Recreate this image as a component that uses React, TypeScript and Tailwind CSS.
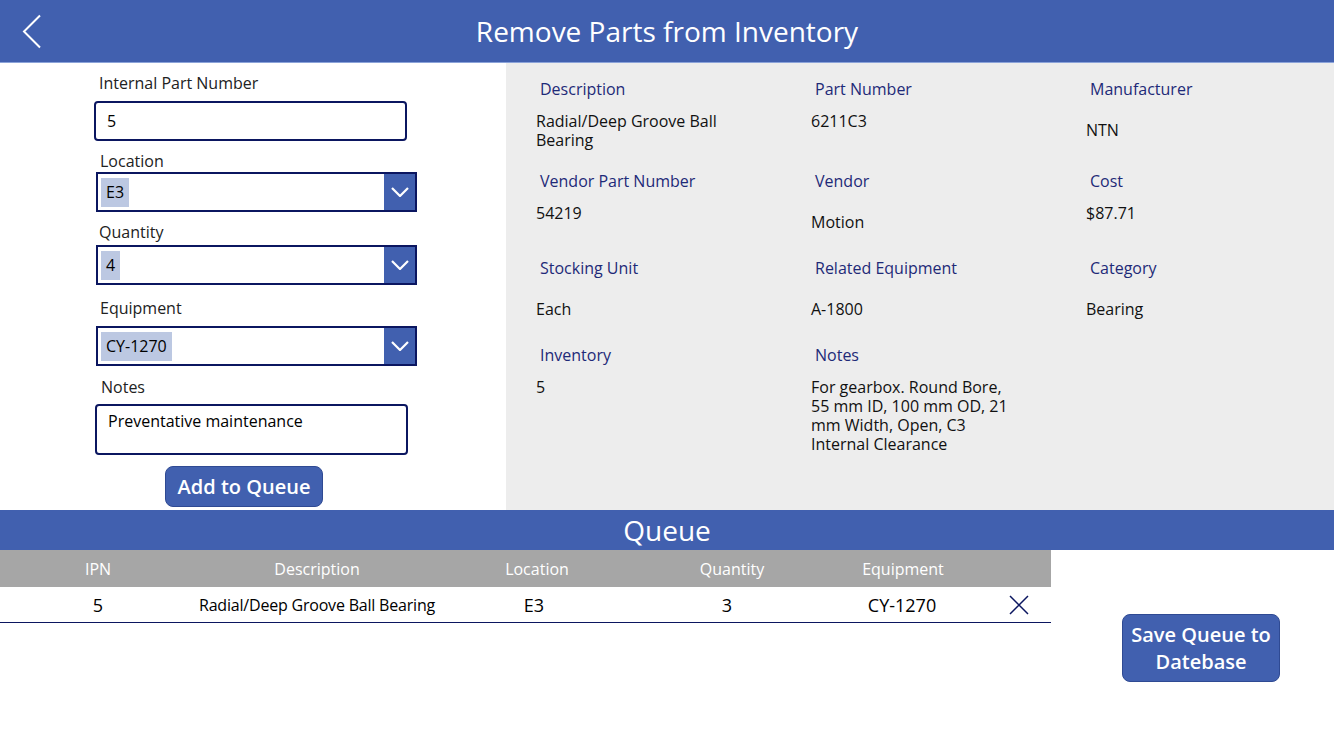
import { ReactNode } from 'react'

const font = { fontFamily: '"Open Sans", "Noto Sans", sans-serif' }

function Chevron() {
  return (
    <svg width="18" height="10" viewBox="0 0 18 10" fill="none" aria-hidden="true">
      <path d="M1 1l8 8 8-8" stroke="white" strokeWidth="2.2" />
    </svg>
  )
}

function Dropdown({ value }: { value: string }) {
  return (
    <div className="flex h-[40px] w-[321px] border-2 border-[#0b1660] bg-white">
      <div className="flex flex-1 items-center pl-[3px]">
        <span className="flex h-[29px] items-center bg-[#bcc8e2] px-[5px] text-[16px] text-black">
          {value}
        </span>
      </div>
      <div className="flex w-[31px] items-center justify-center bg-[#4160af]">
        <Chevron />
      </div>
    </div>
  )
}

function Label({ children, className = '' }: { children: ReactNode; className?: string }) {
  return <p className={`h-[22px] text-[16px] leading-[22px] text-[#222] ${className}`}>{children}</p>
}

function Field({
  label,
  value,
  shift = false,
  multi = false,
}: {
  label: string
  value: ReactNode
  shift?: boolean
  multi?: boolean
}) {
  return (
    <div>
      <p className="h-[22px] pl-[4px] text-[16px] leading-[22px] text-[#1e2a78]">{label}</p>
      <div
        className={`text-[16px] leading-[19px] text-[#111] ${shift ? 'pt-[21px]' : 'pt-[12px]'} ${
          multi ? 'w-[206px]' : ''
        }`}
      >
        {value}
      </div>
    </div>
  )
}

const columns = [
  { key: 'ipn', label: 'IPN', width: 'w-[196px]' },
  { key: 'desc', label: 'Description', width: 'w-[242px]' },
  { key: 'loc', label: 'Location', width: 'w-[198px]' },
  { key: 'qty', label: 'Quantity', width: 'w-[192px]' },
  { key: 'equip', label: 'Equipment', width: 'w-[150px]' },
]

export default function App() {
  return (
    <div className="h-[750px] w-[1334px] overflow-hidden bg-white" style={font}>
      <header className="relative flex h-[63px] items-center justify-center border-b border-[#8ba3d9] bg-[#4160af]">
        <svg
          className="absolute left-[21px] top-[14px]"
          width="22"
          height="35"
          viewBox="0 0 22 35"
          fill="none"
          aria-hidden="true"
        >
          <path d="M19 1.5L3 17.5l16 16" stroke="white" strokeWidth="2" />
        </svg>
        <h1 className="text-[28px] leading-none text-white">Remove Parts from Inventory</h1>
      </header>

      <div className="flex h-[447px]">
        <section className="w-[506px] pl-[94px] pt-[9px]">
          <Label className="pl-[5px]">Internal Part Number</Label>
          <div className="mt-[7px] flex h-[40px] w-[313px] items-center rounded-[4px] border-2 border-[#0b1660] pl-[11px] text-[16px]">
            5
          </div>

          <Label className="mt-[9px] pl-[6px]">Location</Label>
          <div className="pl-[2px]">
            <Dropdown value="E3" />
          </div>

          <Label className="mt-[9px] pl-[5px]">Quantity</Label>
          <div className="mt-[2px] pl-[2px]">
            <Dropdown value="4" />
          </div>

          <Label className="mt-[12px] pl-[6px]">Equipment</Label>
          <div className="mt-[7px] pl-[2px]">
            <Dropdown value="CY-1270" />
          </div>

          <Label className="mt-[10px] pl-[7px]">Notes</Label>
          <div className="ml-[1px] mt-[6px] h-[51px] w-[313px] rounded-[4px] border-2 border-[#0b1660] pl-[11px] pt-[4px] text-[16px] leading-[22px]">
            Preventative maintenance
          </div>

          <button className="ml-[71px] mt-[11px] h-[41px] w-[158px] rounded-[8px] border border-[#2f4a93] bg-[#4160af] text-[20px] font-semibold text-white">
            Add to Queue
          </button>
        </section>

        <section className="flex-1 bg-[#ededed] pl-[30px] pt-[15px]">
          <div className="grid grid-cols-[275px_275px_1fr] grid-rows-[92px_87px_87px_auto]">
            <Field label="Description" value={<>Radial/Deep Groove Ball<br />Bearing</>} />
            <Field label="Part Number" value="6211C3" />
            <Field label="Manufacturer" value="NTN" shift />

            <Field label="Vendor Part Number" value="54219" />
            <Field label="Vendor" value="Motion" shift />
            <Field label="Cost" value="$87.71" />

            <Field label="Stocking Unit" value="Each" shift />
            <Field label="Related Equipment" value="A-1800" shift />
            <Field label="Category" value="Bearing" shift />

            <Field label="Inventory" value="5" />
            <Field
              label="Notes"
              multi
              value="For gearbox. Round Bore, 55 mm ID, 100 mm OD, 21 mm Width, Open, C3 Internal Clearance"
            />
          </div>
        </section>
      </div>

      <div className="flex h-[40px] items-center justify-center bg-[#4160af]">
        <h2 className="text-[28px] leading-none text-white">Queue</h2>
      </div>

      <div className="flex">
        <div className="w-[1051px]">
          <div className="flex h-[37px] items-center bg-[#a6a6a6] text-[16px] text-white">
            {columns.map((col) => (
              <div key={col.key} className={`${col.width} text-center`}>
                {col.label}
              </div>
            ))}
          </div>
          <div className="flex h-[36px] items-center border-b border-[#0b1660] pt-[1px] text-black">
            <div className="w-[196px] text-center text-[18px]">5</div>
            <div className="w-[242px] text-center text-[16px] tracking-[-0.2px]">
              Radial/Deep Groove Ball Bearing
            </div>
            <div className="w-[192px] text-center text-[18px]">E3</div>
            <div className="w-[194px] text-center text-[18px]">3</div>
            <div className="w-[156px] text-center text-[18px]">CY-1270</div>
            <svg className="ml-[29px]" width="20" height="20" viewBox="0 0 20 20" aria-hidden="true">
              <path d="M1 1l18 18M19 1L1 19" stroke="#0b1660" strokeWidth="1.5" />
            </svg>
          </div>
        </div>

        <div className="flex-1 pl-[71px] pt-[64px]">
          <button className="h-[68px] w-[158px] rounded-[8px] border border-[#2f4a93] bg-[#4160af] text-[20px] font-semibold leading-[27px] text-white">
            Save Queue to
            <br />
            Datebase
          </button>
        </div>
      </div>
    </div>
  )
}
